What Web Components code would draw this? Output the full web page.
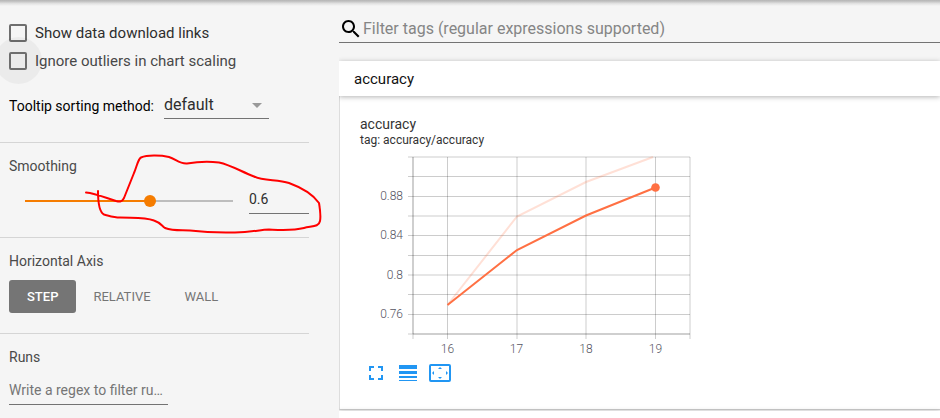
<!DOCTYPE html>
<html lang="en">
<head>
<meta charset="utf-8">
<title>Scalars</title>
<style>
  html, body { margin: 0; height: 100%; }
  body { background: #f5f5f5; font-family: Roboto, "Liberation Sans", sans-serif; color: #212121; overflow: hidden; }
</style>
</head>
<body>
<tb-dashboard>
  <tb-sidebar slot="sidebar">
    <tb-section>
      <tb-options>
        <tb-checkbox label="Show data download links"></tb-checkbox>
        <tb-checkbox label="Ignore outliers in chart scaling" focused></tb-checkbox>
      </tb-options>
      <tb-dropdown label="Tooltip sorting method:" value="default"></tb-dropdown>
    </tb-section>
    <tb-section heading="Smoothing">
      <tb-smoothing></tb-smoothing>
      <tb-scribble slot="over"></tb-scribble>
    </tb-section>
    <tb-section heading="Horizontal Axis">
      <tb-axis-picker></tb-axis-picker>
    </tb-section>
    <tb-section heading="Runs">
      <tb-run-filter></tb-run-filter>
    </tb-section>
  </tb-sidebar>
  <tb-tag-filter></tb-tag-filter>
  <tb-category name="accuracy">
    <tb-chart-card heading="accuracy" tag="tag: accuracy/accuracy">
      <tb-line-chart></tb-line-chart>
      <tb-chart-tools></tb-chart-tools>
    </tb-chart-card>
  </tb-category>
  <tb-category></tb-category>
</tb-dashboard>

<script>
const define = (name, html, setup) => {
  const template = document.createElement('template');
  template.innerHTML = `<style>*{box-sizing:border-box} :host{display:block;box-sizing:border-box}
    input,button,select{font:inherit;color:inherit;margin:0;border-radius:0;outline:none}</style>` + html;
  customElements.define(name, class extends HTMLElement {
    constructor() {
      super();
      this.attachShadow({ mode: 'open' }).append(template.content.cloneNode(true));
    }
    connectedCallback() { if (setup) setup(this.shadowRoot, this); }
  });
};

define('tb-dashboard', `
  <style>
    :host { display: grid; grid-template-columns: 309px minmax(0, 1fr); grid-template-rows: minmax(0, 1fr); column-gap: 30px; height: 100vh; overflow: hidden; position: relative; }
    .shade { position: absolute; inset: 0 0 auto 0; height: 6px; background: linear-gradient(#b4b4b4, #c4c4c4 25%, #e2e2e2 60%, #f5f5f5); pointer-events: none; }
    main { padding-top: 17px; overflow: hidden; }
  </style>
  <slot name="sidebar"></slot>
  <main><slot></slot></main>
  <div class="shade"></div>`);

define('tb-sidebar', `<aside><slot></slot></aside>`);

define('tb-section', `
  <style>
    :host { position: relative; border-bottom: 1px solid #d5d5d5; padding: 13px 0 0 9px; }
    :host(:last-of-type) { border-bottom: 0; }
    h3 { margin: 0; font-size: 14px; font-weight: 400; line-height: 20px; color: #4a4a4a; }
    h3:empty { display: none; }
  </style>
  <h3></h3><slot></slot><slot name="over"></slot>`,
  (root, el) => { root.querySelector('h3').textContent = el.getAttribute('heading') || ''; });

define('tb-options', `
  <style>:host { display: grid; gap: 10px; padding-top: 11px; }</style><slot></slot>`);

define('tb-checkbox', `
  <style>
    :host { position: relative; height: 18px; }
    label { display: flex; align-items: center; gap: 8px; font-size: 15px; line-height: 18px; color: #2e2e2e; }
    :host([focused]) label { color: #484848; }
    input { appearance: none; width: 18px; height: 18px; border: 2px solid #6e6e6e; border-radius: 2px; position: relative; }
    :host([focused])::before { content: ""; position: absolute; left: -14px; top: -15px; width: 47px; height: 47px; border-radius: 50%; background: rgba(0,0,0,.04); }
  </style>
  <label><input type="checkbox"><span></span></label>`,
  (root, el) => { root.querySelector('span').textContent = el.getAttribute('label'); });

define('tb-dropdown', `
  <style>
    :host { display: flex; align-items: flex-start; gap: 10px; padding: 24px 0 23px; }
    label { font-size: 14px; line-height: 24px; color: #000; }
    .field { position: relative; width: 105px; border-bottom: 1px solid #737373; }
    select { appearance: none; display: block; width: 100%; height: 24px; border: 0; padding: 0 0 4px; background: none; font-size: 16px; color: #2e2e2e; }
    svg { position: absolute; right: 7px; top: 9px; pointer-events: none; }
  </style>
  <label for="method"></label>
  <div class="field"><select id="method"><option></option></select>
  <svg width="10" height="5" viewBox="0 0 10 5"><path d="M0 0h10L5 5z" fill="#999"/></svg></div>`,
  (root, el) => {
    root.querySelector('label').textContent = el.getAttribute('label');
    root.querySelector('option').textContent = el.getAttribute('value');
  });

define('tb-smoothing', `
  <style>
    :host { display: flex; gap: 10px; padding: 13px 0 23px 10px; }
    input[type=range] { appearance: none; flex: 1; min-width: 0; height: 24px; background: linear-gradient(to right, #f57c00 60%, #bdbdbd 60%) center / calc(100% - 12px) 2px no-repeat; }
    input[type=range]::-webkit-slider-thumb { appearance: none; width: 12px; height: 12px; border-radius: 50%; background: #f57c00; }
    input[type=text] { width: 60px; height: 25px; padding: 0 0 4px; border: 0; border-bottom: 1px solid #737373; background: none; font-size: 14px; color: #2e2e2e; }
  </style>
  <input type="range" min="0" max="1" step="0.1" value="0.6" aria-label="Smoothing">
  <input type="text" value="0.6" aria-label="Smoothing value">`);

define('tb-scribble', `
  <style>
    :host { position: absolute; left: 80px; top: 7px; pointer-events: none; }
    svg { display: block; }
  </style>
  <svg width="246" height="86" viewBox="80 150 246 86" fill="none" stroke="#f00" stroke-width="2" stroke-linecap="round" stroke-linejoin="round">
    <path d="M86 192.500C96 193.500 106 198 116 201C120 202 122 202 124 198L134 173C137 166 138 159 141 157.500C147 155 160 155 169 157C176 159 179 164 187 163.500C196 162 210 161.500 219 162.500C231 165 242 172 254 176.500C263 181 277 179.500 289 183C300 187 312 193 319 203C320 209 321 216 320 221C319 227 312 226 304 228C292 231 280 230 269 229.500C260 229.500 252 232.500 235 232.500C216 233 202 232 190 230.500C180 230 173 231 165 228C161 225 161 223 154 220.500C145 217 136 218 120 217.500C114 217.500 110 216 104 214.500C99 212 98 201 98 191"/>
  </svg>`);

define('tb-axis-picker', `
  <style>
    :host { display: flex; padding: 9px 0 20px; }
    button { border: 0; height: 33px; padding: 0 17px; font-size: 13px; background: none; color: #757575; }
    button[aria-pressed=true] { background: #757575; color: #fff; font-weight: 500; border-radius: 3px; padding: 0 18px; }
  </style>
  <button type="button" aria-pressed="true">STEP</button><button type="button" aria-pressed="false">RELATIVE</button><button type="button" aria-pressed="false">WALL</button>`);

define('tb-run-filter', `
  <style>
    input { display: block; width: 159px; height: 25px; margin-top: 13px; padding: 0 0 4px; border: 0; border-bottom: 1px solid #737373; background: none; font-size: 14px; text-overflow: ellipsis; }
    input::placeholder { color: #757575; }
  </style>
  <input type="text" placeholder="Write a regex to filter runs" aria-label="Filter runs">`);

define('tb-tag-filter', `
  <style>
    :host { display: flex; border-bottom: 1px solid #737373; margin-bottom: 18px; }
    svg { flex: none; }
    input { flex: 1; min-width: 0; height: 25px; border: 0; padding: 0 0 2px; background: none; font-size: 16px; }
    input::placeholder { color: #858585; }
  </style>
  <svg width="24" height="24" viewBox="0 0 24 24"><path d="M15.5 14h-.79l-.28-.27C15.41 12.59 16 11.11 16 9.5 16 5.91 13.09 3 9.5 3S3 5.91 3 9.5 5.91 16 9.5 16c1.61 0 3.09-.59 4.23-1.57l.27.28v.79l5 4.99L20.49 19l-4.99-5zm-6 0C7.01 14 5 11.99 5 9.5S7.01 5 9.5 5 14 7.01 14 9.5 11.99 14 9.5 14z"/></svg>
  <input type="text" placeholder="Filter tags (regular expressions supported)" aria-label="Filter tags">`);

define('tb-category', `
  <style>
    h2 { position: relative; margin: 0; padding: 1px 15px 0; height: 35px; font-size: 15px; font-weight: 400; line-height: 35px; color: #111; background: #fff; box-shadow: 0 1px 5px rgba(0,0,0,.3); }
    section { background: #fff; border-left: 1px solid #ddd; border-bottom: 1px solid #ccc; margin-bottom: 1px; }
  </style>
  <h2></h2><section><slot></slot></section>`,
  (root, el) => { root.querySelector('h2').textContent = el.getAttribute('name') || ''; });

define('tb-chart-card', `
  <style>
    :host { padding: 20px 20px 25px; }
    h4 { margin: 0; font-size: 14px; font-weight: 400; line-height: 16px; color: #333; }
    p { margin: 0; padding-top: 1px; font-size: 12px; line-height: 14px; color: #333; }
  </style>
  <h4></h4><p></p><slot></slot>`,
  (root, el) => {
    root.querySelector('h4').textContent = el.getAttribute('heading');
    root.querySelector('p').textContent = el.getAttribute('tag');
  });

define('tb-line-chart', `
  <style>
    svg { display: block; }
    .grid { stroke: #000; stroke-opacity: .2; }
    text { font-size: 12px; font-weight: 300; fill: #55545f; }
    .y text { text-anchor: end; }
    .x text { text-anchor: middle; }
  </style>
  <svg width="340" height="210" viewBox="360 147 340 210" role="img" aria-label="accuracy by step">
    <g class="grid"></g>
    <g class="y"><text x="403" y="200">0.88</text><text x="403" y="239">0.84</text><text x="403" y="279">0.8</text><text x="403" y="318">0.76</text></g>
    <g class="x"><text x="447.5" y="353">16</text><text x="516.5" y="353">17</text><text x="586" y="353">18</text><text x="655.5" y="353">19</text></g>
    <g fill="none" stroke="#ff7043" stroke-width="2">
      <path d="M447.5 305L517 216.5 586 182 653 157" stroke-opacity=".22"/>
      <path d="M447.5 305L517 250 586 215.500 655.500 187.500"/>
    </g>
    <circle cx="655.500" cy="187.500" r="4.300" fill="#ff7043"/>
  </svg>`,
  (root) => {
    const line = (x1, y1, x2, y2, w = 1) => `<line x1="${x1}" y1="${y1}" x2="${x2}" y2="${y2}" stroke-width="${w}"/>`;
    const ys = [157, 176.5, 196.5, 216, 235.5, 255.5, 275, 294.5, 314.5, 334];
    const xs = [447.5, 517, 586, 655.5, 690];
    root.querySelector('.grid').innerHTML =
      ys.map(y => line(408, y, 690, y)).join('') +
      xs.map(x => line(x, 157, x, 339)).join('') +
      line(413, 157, 413, 339) + line(413, 157, 413, 334) + line(413, 334, 690, 334);
  });

define('tb-chart-tools', `
  <style>
    :host { display: flex; padding: 5px 0 0 4px; gap: 8px; }
    button { width: 24px; height: 22px; border: 0; padding: 0; background: none; display: grid; place-items: center; color: #2196f3; }
    svg { display: block; }
  </style>
  <button type="button" aria-label="Fullscreen"><svg width="14" height="14" viewBox="5 5 14 14" fill="currentColor"><path d="M7 14H5v5h5v-2H7v-3zm-2-4h2V7h3V5H5v5zm12 7h-3v2h5v-5h-2v3zM14 5v2h3v3h2V5h-5z"/></svg></button>
  <button type="button" aria-label="Toggle log scale"><svg width="18" height="16" viewBox="0 0 18 16" fill="currentColor"><path d="M0 0h18v4H0zM0 6h18v3H0zM0 11h18v2H0zM0 15h18v1H0z"/></svg></button>
  <button type="button" aria-label="Fit domain to data"><svg width="22" height="18" viewBox="0 0 22 18" fill="currentColor"><path fill-rule="evenodd" d="M2 0h18a2 2 0 0 1 2 2v14a2 2 0 0 1-2 2H2a2 2 0 0 1-2-2V2a2 2 0 0 1 2-2zm0 2v14h18V2z"/><path d="M11 3l2 2H9zM11 15l2-2H9zM3 9l2-2v4zM19 9l-2-2v4z"/></svg></button>`);
</script>
</body>
</html>
